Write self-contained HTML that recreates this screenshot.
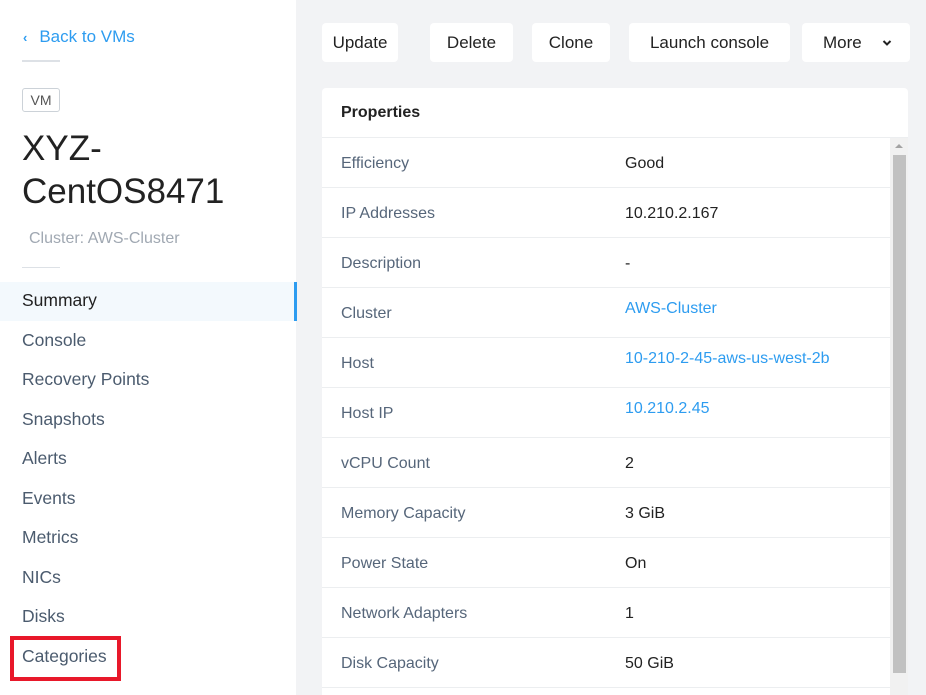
<!DOCTYPE html>
<html><head><meta charset="utf-8"><style>
*{margin:0;padding:0;box-sizing:border-box}
html,body{width:926px;height:695px;overflow:hidden}
body{background:#f2f3f5;font-family:"Liberation Sans",sans-serif;position:relative}
.side{position:absolute;left:0;top:0;width:296px;height:695px;background:#fff}
.abs{position:absolute;white-space:nowrap}
.back{left:23px;top:27px;color:#2d9cf0;font-size:17px}
.hr{height:2px;background:#dde1e6;width:38px;left:22px}
.tag{left:22px;top:88px;width:38px;height:24px;border:1px solid #ccd2d8;border-radius:3px;font-size:14px;color:#555;text-align:center;line-height:22px}
.title{left:22px;top:127px;font-size:35px;color:#222;line-height:43px;font-weight:300}
.sub{left:29px;top:229px;font-size:16px;color:#a0a8b2}
.active{left:0;top:282px;width:297px;height:39px;background:#f3f9fd;border-right:3px solid #2d9cf0}
.nav{left:22px;font-size:17.5px;color:#4b5b6e}
.red{left:10px;top:636px;width:111px;height:45px;border:4px solid #e8182a}
.btn{top:23px;height:39px;background:#fff;border-radius:4px;font-size:17px;color:#222;text-align:center;line-height:39px}
.card{left:322px;top:88px;width:586px;height:607px;background:#fff;border-radius:4px 4px 0 0}
.ph{left:341px;top:104px;font-size:16px;font-weight:bold;color:#222}
.line{left:322px;height:1px;background:#eceef0;width:568px}
.lab{left:341px;font-size:16px;color:#56667a}
.val{left:625px;font-size:16px;color:#222}
.lnk{left:625px;font-size:16px;color:#2d9cf0}
</style></head><body>
<div class="side">
<div class="abs back"><span style="font-size:13px;font-weight:bold;margin-right:12px">&#8249;</span>Back to VMs</div>
<div class="abs hr" style="top:60px"></div>
<div class="abs tag">VM</div>
<div class="abs title">XYZ-<br>CentOS8471</div>
<div class="abs sub" style="top:230px">Cluster: AWS-Cluster</div>
<div class="abs hr" style="top:267px;height:1px"></div>
<div class="abs active"></div>
<div class="abs nav" style="top:290px;color:#222">Summary</div>
<div class="abs nav" style="top:330px">Console</div>
<div class="abs nav" style="top:369px">Recovery Points</div>
<div class="abs nav" style="top:409px">Snapshots</div>
<div class="abs nav" style="top:448px">Alerts</div>
<div class="abs nav" style="top:488px">Events</div>
<div class="abs nav" style="top:527px">Metrics</div>
<div class="abs nav" style="top:567px">NICs</div>
<div class="abs nav" style="top:606px">Disks</div>
<div class="abs nav" style="top:646px">Categories</div>
<div class="abs red"></div>
</div>
<div class="abs btn" style="left:322px;width:76px">Update</div>
<div class="abs btn" style="left:430px;width:83px">Delete</div>
<div class="abs btn" style="left:532px;width:78px">Clone</div>
<div class="abs btn" style="left:629px;width:161px">Launch console</div>
<div class="abs btn" style="left:802px;width:108px;text-align:left;padding-left:21px">More<svg style="position:absolute;left:80px;top:16px" width="10" height="8" viewBox="0 0 10 8"><path d="M1.5 2 L5 5.5 L8.5 2" stroke="#222" stroke-width="2" fill="none"/></svg></div>
<div class="abs card"></div>
<div class="abs ph">Properties</div>
<div class="abs line" style="top:137px;width:586px"></div>
<div class="abs line" style="top:187px"></div>
<div class="abs line" style="top:237px"></div>
<div class="abs line" style="top:287px"></div>
<div class="abs line" style="top:337px"></div>
<div class="abs line" style="top:387px"></div>
<div class="abs line" style="top:437px"></div>
<div class="abs line" style="top:487px"></div>
<div class="abs line" style="top:537px"></div>
<div class="abs line" style="top:587px"></div>
<div class="abs line" style="top:637px"></div>
<div class="abs line" style="top:687px"></div>
<div class="abs lab" style="top:155px">Efficiency</div><div class="abs val" style="top:155px">Good</div>
<div class="abs lab" style="top:205px">IP Addresses</div><div class="abs val" style="top:205px">10.210.2.167</div>
<div class="abs lab" style="top:255px">Description</div><div class="abs val" style="top:255px">-</div>
<div class="abs lab" style="top:305px">Cluster</div><div class="abs lnk" style="top:300px">AWS-Cluster</div>
<div class="abs lab" style="top:355px">Host</div><div class="abs lnk" style="top:350px">10-210-2-45-aws-us-west-2b</div>
<div class="abs lab" style="top:405px">Host IP</div><div class="abs lnk" style="top:400px">10.210.2.45</div>
<div class="abs lab" style="top:455px">vCPU Count</div><div class="abs val" style="top:455px">2</div>
<div class="abs lab" style="top:505px">Memory Capacity</div><div class="abs val" style="top:505px">3 GiB</div>
<div class="abs lab" style="top:555px">Power State</div><div class="abs val" style="top:555px">On</div>
<div class="abs lab" style="top:605px">Network Adapters</div><div class="abs val" style="top:605px">1</div>
<div class="abs lab" style="top:655px">Disk Capacity</div><div class="abs val" style="top:655px">50 GiB</div>
<div class="abs" style="left:890px;top:138px;width:18px;height:557px;background:#f1f1f1"></div>
<svg class="abs" style="left:895px;top:143px" width="8" height="6"><path d="M0 5 L4 1 L8 5Z" fill="#a3a3a3"/></svg>
<div class="abs" style="left:893px;top:155px;width:13px;height:518px;background:#c1c1c1"></div>
</body></html>
